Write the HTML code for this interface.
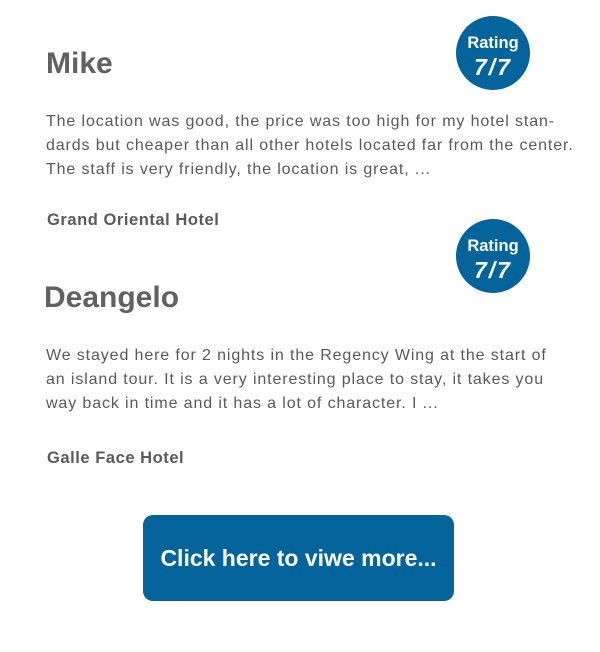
<!DOCTYPE html>
<html><head><style>
body{margin:0;width:600px;height:652px;background:#fff;font-family:"Liberation Sans",sans-serif;color:#595959;position:relative;overflow:hidden}
.a{position:absolute;white-space:nowrap}
.name{font-size:30px;font-weight:bold;color:#616161}
.p{font-size:16px;line-height:24px;letter-spacing:0.88px;color:#595959}
.h{font-size:16.5px;font-weight:bold;letter-spacing:0.55px;color:#5a5a5a}
.c{position:absolute;width:74px;height:74px;border-radius:50%;background:#02649a;color:#fff;text-align:center;font-weight:bold}
.c .r{font-size:16.5px;margin-top:18px;line-height:18px}
.c .s{font-size:23px;line-height:30px;font-style:italic;letter-spacing:2px}
.btn{position:absolute;left:143px;top:515px;width:311px;height:86px;border-radius:10px;background:#02649a;color:#fff;font-weight:bold;font-size:23px;line-height:86px;text-align:center}
</style></head><body>
<div class="c" style="left:456px;top:16px"><div class="r">Rating</div><div class="s">7/7</div></div>
<div class="a name" style="left:46px;top:47px">Mike</div>
<div class="a p" style="left:46px;top:110px">The location was good, the price was too high for my hotel stan-<br>dards but cheaper than all other hotels located far from the center.<br>The staff is very friendly, the location is great, ...</div>
<div class="a h" style="left:47px;top:211px">Grand Oriental Hotel</div>
<div class="c" style="left:456px;top:219px"><div class="r">Rating</div><div class="s">7/7</div></div>
<div class="a name" style="left:44px;top:281px">Deangelo</div>
<div class="a p" style="left:46px;top:344px">We stayed here for 2 nights in the Regency Wing at the start of<br>an island tour. It is a very interesting place to stay, it takes you<br>way back in time and it has a lot of character. I ...</div>
<div class="a h" style="left:47px;top:449px">Galle Face Hotel</div>
<div class="btn">Click here to viwe more...</div>
</body></html>
